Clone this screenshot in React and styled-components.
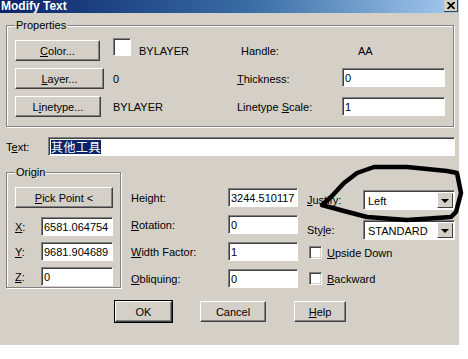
import React from 'react';
import styled, { createGlobalStyle } from 'styled-components';

const Global = createGlobalStyle`
    body {
        margin: 0;
        background: #fff;
        font-family: "Liberation Sans", Arial, sans-serif;
        font-size: 11px;
        color: #000;
    }
`

const Wrapper = styled.div`
    position: relative;
    width: 468px;
    height: 359px;
`

const Dialog = styled.div`
    width: 459px;
    height: 345px;
    background: #d4d0c8;
    display: flex;
    flex-direction: column;
    box-sizing: border-box;
`

const TitleBar = styled.div`
    height: 13px;
    background: linear-gradient(90deg, #0a246a 0%, #3a6ea5 55%, #a6caf0 100%);
    display: flex;
    justify-content: space-between;
    align-items: flex-start;
    overflow: hidden;
`

const Title = styled.div`
    color: #fff;
    font-weight: bold;
    font-size: 12px;
    line-height: 12px;
    padding-left: 1px;
`

const CloseBtn = styled.div`
    width: 14px;
    height: 12px;
    margin-right: 1px;
    background: #d4d0c8;
    border-bottom: 1px solid #404040;
    border-right: 1px solid #404040;
    box-sizing: border-box;
    display: flex;
    align-items: center;
    justify-content: center;
`

const Group = styled.div`
    position: relative;
    box-sizing: border-box;
    margin: ${p => p.$top}px 0 0 6px;
    width: ${p => p.$w}px;
    height: ${p => p.$h}px;
    border: 1px solid #808080;
    box-shadow: inset 1px 1px 0 #fff, 1px 1px 0 #fff;
    padding: ${p => p.$pad};
    flex-shrink: 0;
`

const Legend = styled.span`
    position: absolute;
    top: -7px;
    left: 8px;
    padding: 0 1px;
    background: #d4d0c8;
    line-height: 13px;
`

const PropGrid = styled.div`
    display: grid;
    grid-template-columns: 98px 124px 105px 103px;
    grid-auto-rows: 21px;
    row-gap: 7px;
    align-items: center;
`

const Button = styled.div`
    box-sizing: border-box;
    width: ${p => p.$w}px;
    height: ${p => p.$h || 21}px;
    display: flex;
    align-items: center;
    justify-content: center;
    background: #d4d0c8;
    border: 1px solid;
    border-color: #fff #404040 #404040 #fff;
    box-shadow: inset -1px -1px 0 #808080;
    outline: ${p => (p.$default ? '1px solid #000' : 'none')};
    font-size: 11px;
`

const Field = styled.div`
    box-sizing: border-box;
    width: ${p => p.$w}px;
    height: ${p => p.$h || 19}px;
    background: #fff;
    border: 1px solid;
    border-color: #808080 #fff #fff #808080;
    box-shadow: inset 1px 1px 0 #404040;
    padding: 0 2px;
    display: flex;
    align-items: center;
    align-self: ${p => p.$self || 'center'};
    white-space: nowrap;
    overflow: hidden;
`

const Swatch = styled.div`
    box-sizing: border-box;
    width: 18px;
    height: 18px;
    margin-top: -7px;
    background: #fff;
    border: 1px solid;
    border-color: #808080 #fff #fff #808080;
    box-shadow: inset 1px 1px 0 #404040;
`

const ColorCell = styled.div`
    display: flex;
    align-items: center;
    gap: 8px;
`

const Static = styled.div`
    padding-left: ${p => p.$indent || 0}px;
    white-space: nowrap;
`

const U = styled.span`
    text-decoration: underline;
`

const TextRow = styled.div`
    display: flex;
    align-items: center;
    margin: 10px 0 0 6px;
    height: 19px;
`

const TextLabel = styled.div`
    width: 42px;
`

const Selected = styled.span`
    background: #0a246a;
    color: #fff;
    font-family: "Noto Sans CJK SC", sans-serif;
    font-size: 12px;
    line-height: 14px;
    letter-spacing: 0.5px;
`

const Lower = styled.div`
    display: flex;
    align-items: flex-start;
    margin-top: 16px;
`

const OriginGrid = styled.div`
    display: grid;
    grid-template-columns: 26px 72px;
    grid-auto-rows: 19px;
    row-gap: 6px;
    align-items: center;
    margin-top: 9px;
`

const MidGrid = styled.div`
    display: grid;
    grid-template-columns: 97px 70px;
    grid-auto-rows: 19px;
    row-gap: 8px;
    align-items: center;
    margin: 16px 0 0 10px;
`

const RightCol = styled.div`
    display: grid;
    grid-template-columns: 56px 92px;
    margin: 18px 0 0 9px;
    align-items: center;
    row-gap: 10px;
`

const Combo = styled.div`
    box-sizing: border-box;
    width: 92px;
    height: 20px;
    background: #fff;
    border: 1px solid;
    border-color: #808080 #fff #fff #808080;
    box-shadow: inset 1px 1px 0 #404040;
    display: flex;
    align-items: center;
    justify-content: space-between;
    padding: 2px 1px 1px 4px;
`

const ComboArrow = styled.div`
    box-sizing: border-box;
    width: 16px;
    height: 100%;
    background: #d4d0c8;
    border: 1px solid;
    border-color: #d4d0c8 #404040 #404040 #fff;
    display: flex;
    align-items: center;
    justify-content: center;
    &::after {
        content: '';
        border-left: 4px solid transparent;
        border-right: 4px solid transparent;
        border-top: 4px solid #000;
    }
`

const CheckRow = styled.div`
    grid-column: 1 / 3;
    display: flex;
    align-items: center;
    gap: 5px;
    padding-left: 2px;
    margin-top: ${p => p.$mt || 0}px;
`

const Check = styled.div`
    box-sizing: border-box;
    width: 13px;
    height: 13px;
    background: #fff;
    border: 1px solid;
    border-color: #808080 #fff #fff #808080;
    box-shadow: inset 1px 1px 0 #404040, inset -1px -1px 0 #d4d0c8;
`

const ButtonRow = styled.div`
    display: flex;
    gap: 28px;
    margin: 13px 0 0 115px;
`

const Annotation = styled.svg`
    position: absolute;
    left: 0;
    top: 0;
    pointer-events: none;
`

const ellipse = [
    [322, 205], [344, 211], [367, 217], [407, 220], [451, 217], [456, 212],
    [461, 193], [457, 173], [447, 171], [407, 167], [374, 167], [357, 173],
    [344, 183], [331, 197], [322, 205]
].map(p => p.join(',')).join(' ')

const App = () => {
    return (
        <Wrapper>
            <Global />
            <Dialog>
                <TitleBar>
                    <Title>Modify Text</Title>
                    <CloseBtn>
                        <svg width="8" height="7" viewBox="0 0 8 7">
                            <path d="M0.5 0 L7.5 7 M7.5 0 L0.5 7" stroke="#000" strokeWidth="1.8" />
                        </svg>
                    </CloseBtn>
                </TitleBar>

                <Group $top={12} $w={448} $h={102} $pad="14px 0 0 8px">
                    <Legend>Properties</Legend>
                    <PropGrid>
                        <Button $w={85}><span><U>C</U>olor...</span></Button>
                        <ColorCell>
                            <Swatch />
                            <span>BYLAYER</span>
                        </ColorCell>
                        <Static $indent={4}>Handle:</Static>
                        <Static $indent={16}>AA</Static>

                        <Button $w={89}><span><U>L</U>ayer...</span></Button>
                        <Static>0</Static>
                        <Static><U>T</U>hickness:</Static>
                        <Field $w={103} $self="start">0</Field>

                        <Button $w={86}><span>L<U>i</U>netype...</span></Button>
                        <Static>BYLAYER</Static>
                        <Static>Linetype <U>S</U>cale:</Static>
                        <Field $w={103}>1</Field>
                    </PropGrid>
                </Group>

                <TextRow>
                    <TextLabel>T<U>e</U>xt:</TextLabel>
                    <Field $w={407}><Selected>其他工具</Selected></Field>
                </TextRow>

                <Lower>
                    <Group $top={0} $w={115} $h={116} $pad="14px 0 0 8px">
                        <Legend>Origin</Legend>
                        <Button $w={98}><span><U>P</U>ick Point &lt;</span></Button>
                        <OriginGrid>
                            <Static><U>X</U>:</Static>
                            <Field $w={72}>6581.064754</Field>
                            <Static><U>Y</U>:</Static>
                            <Field $w={72}>9681.904689</Field>
                            <Static><U>Z</U>:</Static>
                            <Field $w={72}>0</Field>
                        </OriginGrid>
                    </Group>

                    <MidGrid>
                        <Static>Height:</Static>
                        <Field $w={70}>3244.510117</Field>
                        <Static><U>R</U>otation:</Static>
                        <Field $w={70}>0</Field>
                        <Static><U>W</U>idth Factor:</Static>
                        <Field $w={70}>1</Field>
                        <Static><U>O</U>bliquing:</Static>
                        <Field $w={70}>0</Field>
                    </MidGrid>

                    <RightCol>
                        <Static><U>J</U>ustify:</Static>
                        <Combo>
                            <span>Left</span>
                            <ComboArrow />
                        </Combo>
                        <Static>Sty<U>l</U>e:</Static>
                        <Combo>
                            <span>STANDARD</span>
                            <ComboArrow />
                        </Combo>
                        <CheckRow $mt={-4}>
                            <Check />
                            <span><U>U</U>pside Down</span>
                        </CheckRow>
                        <CheckRow $mt={3}>
                            <Check />
                            <span><U>B</U>ackward</span>
                        </CheckRow>
                    </RightCol>
                </Lower>

                <ButtonRow>
                    <Button $w={57} $h={21} $default>OK</Button>
                    <Button $w={66} $h={21}>Cancel</Button>
                    <Button $w={52} $h={21}><span><U>H</U>elp</span></Button>
                </ButtonRow>
            </Dialog>

            <Annotation width="468" height="359" viewBox="0 0 468 359">
                <polyline points={ellipse} fill="none" stroke="#000" strokeWidth="4.5"
                    strokeLinejoin="round" strokeLinecap="round" />
            </Annotation>
        </Wrapper>
    )
}

export default App
